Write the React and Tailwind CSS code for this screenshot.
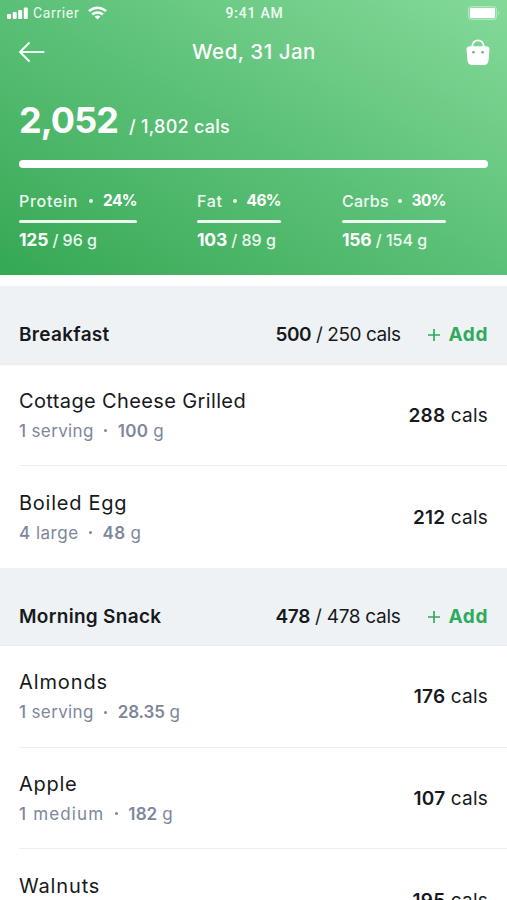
const macros = [
  { name: "Protein", percent: "24%", eaten: 125, goal: 96, box: "w-[118px] mr-[60px]", label: "tracking-[0.7px]" },
  { name: "Fat", percent: "46%", eaten: 103, goal: 89, box: "w-[84px] mr-[61px]", label: "tracking-[0.7px]" },
  { name: "Carbs", percent: "30%", eaten: 156, goal: 154, box: "w-[104px]", label: "tracking-[0.2px]" },
];

const meals = [
  {
    name: "Breakfast",
    total: 500,
    goal: 250,
    tracking: "tracking-[-0.45px]",
    items: [
      { name: "Cottage Cheese Grilled", qty: "1", unit: "serving", weight: "100", cals: 288, title: "tracking-[0.37px]", sub: "tracking-[0.35px]" },
      { name: "Boiled Egg", qty: "4", unit: "large", weight: "48", cals: 212, title: "tracking-[0.75px]", sub: "tracking-[0.5px]" },
    ],
  },
  {
    name: "Morning Snack",
    total: 478,
    goal: 478,
    tracking: "tracking-[-0.3px]",
    items: [
      { name: "Almonds", qty: "1", unit: "serving", weight: "28.35", cals: 176, title: "tracking-[0.9px]", sub: "tracking-[0.35px]", amount: "tracking-[-0.1px]" },
      { name: "Apple", qty: "1", unit: "medium", weight: "182", cals: 107, title: "tracking-[0.7px]", sub: "tracking-[1.15px]", amount: "tracking-[0.1px]" },
      { name: "Walnuts", cals: 195, title: "tracking-[0.85px]" },
    ],
  },
];

function StatusBar() {
  return (
    <div className="grid h-[26px] grid-cols-3 items-center pl-[7px] pr-[7px] font-['Roboto',sans-serif] text-[14px] text-white/90">
      <div className="flex items-center">
        <svg width="21" height="12" viewBox="0 0 21 12" fill="white">
          <rect x="0" y="7" width="4" height="5" rx="1" />
          <rect x="5.7" y="5" width="4" height="7" rx="1" />
          <rect x="11.2" y="3" width="4" height="9" rx="1" />
          <rect x="16.8" y="0.5" width="4" height="11.5" rx="1" />
        </svg>
        <span className="ml-[5px] tracking-[0.65px]">Carrier</span>
        <svg className="ml-[9px]" width="19" height="14" viewBox="0 0 19 14" fill="none" stroke="white" strokeWidth="2.5">
          <path d="M1 5.2C5.8.6 13.2.6 18 5.2" />
          <path d="M4.2 8.5c3-2.8 7.6-2.8 10.6 0" />
          <path d="M9.5 13.5 6.6 10.6c1.6-1.5 4.2-1.5 5.8 0z" fill="white" stroke="none" />
        </svg>
      </div>
      <span className="pl-[2px] text-center font-medium tracking-[0.8px]">9:41 AM</span>
      <div className="flex justify-end">
        <svg width="32" height="14" viewBox="0 0 32 14">
          <rect x="0.5" y="0.5" width="28" height="13" rx="2.5" fill="white" fillOpacity="0.15" stroke="white" strokeOpacity="0.35" />
          <rect x="2" y="2" width="25" height="10" rx="1" fill="white" />
          <path d="M30 5v4c1.8-.6 1.8-3.4 0-4z" fill="white" fillOpacity="0.35" />
        </svg>
      </div>
    </div>
  );
}

function BackIcon() {
  return (
    <svg width="27" height="22" viewBox="0 0 27 22" fill="none" stroke="#f0fff3" strokeWidth="2.1" strokeLinecap="round" strokeLinejoin="round">
      <path d="M11 2 2 11l9 9M2 11h23.500" />
    </svg>
  );
}

function BagIcon() {
  return (
    <svg width="24" height="27" viewBox="0 0 24 27" fill="none">
      <path d="M6.300 9.500V7a5.700 5.700 0 0 1 11.400 0v2.500" stroke="white" strokeWidth="1.800" />
      <path d="M4 7.300h16c2.400 0 3.800 1.400 3.500 3.800l-1 10.400c-.3 3-2 4.500-5 4.500h-11c-3 0-4.700-1.500-5-4.500L.5 11.100C.2 8.700 1.600 7.300 4 7.300z" fill="white" />
      <circle cx="7.400" cy="13.300" r="1.300" fill="#62b67c" />
      <circle cx="16.600" cy="13.300" r="1.300" fill="#62b67c" />
    </svg>
  );
}

function Header() {
  return (
    <header className="h-[275px] bg-linear-to-tr from-[#34a853] via-[#5bc077] to-[#84da99] text-white">
      <StatusBar />
      <div className="flex h-[52px] items-center justify-between pl-[18px] pr-[17px]">
        <BackIcon />
        <h1 className="mr-[3px] text-[20.500px] font-medium tracking-[0.5px]">Wed, 31 Jan</h1>
        <BagIcon />
      </div>

      <div className="mx-[19px] mt-[19px] flex h-[47px] items-baseline">
        <span className="text-[36px] font-bold leading-[46px] tracking-[-0.9px]">2,052</span>
        <span className="ml-[11px] text-[18px] font-medium tracking-[0.25px]">/ 1,802 cals</span>
      </div>
      <div className="mx-[19px] mt-[16px] h-[8px] rounded-full bg-white" />

      <div className="mt-[22px] flex pl-[19px]">
        {macros.map((m) => (
          <div key={m.name} className={m.box}>
            <div className="flex items-center justify-between whitespace-nowrap text-[16px] font-medium leading-[22px] text-white/90">
              <span className={m.label}>{m.name}</span>
              <span className="h-[4px] w-[4px] rounded-full bg-white/90" />
              <span className="text-[15.500px] font-bold tracking-[-0.6px] text-white">{m.percent}</span>
            </div>
            <div className="mt-[8px] h-[3px] rounded-full bg-white/90" />
            <div className="mt-[5px] whitespace-nowrap text-[16px] font-medium leading-[23px] text-white/90">
              <span className="text-[17.500px] font-bold tracking-[-0.2px] text-white">{m.eaten}</span> / {m.goal} g
            </div>
          </div>
        ))}
      </div>
    </header>
  );
}

function FoodRow({ item }) {
  return (
    <li className="ml-[19px] flex h-[101.500px] items-center justify-between border-b border-[#eceef0] pr-[19px] last:border-b-0">
      <div className="h-[54px]">
        <p className={`text-[20px] leading-[26px] ${item.title}`}>{item.name}</p>
        {item.weight && (
          <div className="mt-[6px] flex items-center text-[17px] leading-[22px] text-[#7d879c]">
            <span className={item.sub}><b className="font-medium">{item.qty}</b> {item.unit}</span>
            <span className="mx-[10.500px] h-[3px] w-[3px] rounded-full bg-[#7d879c]" />
            <span className={item.amount || "tracking-[0.3px]"}><b className="font-semibold">{item.weight}</b> g</span>
          </div>
        )}
      </div>
      <p className="mt-[2px] text-[19px] tracking-[0.2px]"><b className="font-semibold">{item.cals}</b> cals</p>
    </li>
  );
}

function Meal({ meal }) {
  return (
    <section>
      <div className="flex h-[78.500px] items-center border-b border-[#e9edf0] bg-[#eef2f5] px-[19px] pt-[21px] text-[19px]">
        <h2 className="flex-1 font-semibold tracking-[0.3px]">{meal.name}</h2>
        <span className={meal.tracking}><b className="font-semibold">{meal.total}</b> / {meal.goal} cals</span>
        <button className="ml-[28px] flex items-center font-bold tracking-[0.6px] text-[#2fab5c]">
          <svg className="mr-[8px]" width="12" height="12" viewBox="0 0 12 12" stroke="currentColor" strokeWidth="1.700">
            <path d="M6 0v12M0 6h12" />
          </svg>
          Add
        </button>
      </div>
      <ul>
        {meal.items.map((item) => (
          <FoodRow key={item.name} item={item} />
        ))}
      </ul>
    </section>
  );
}

export default function App() {
  return (
    <div className="h-[900px] w-[507px] overflow-hidden bg-white font-['Inter',sans-serif] text-[#17191c]">
      <Header />
      <main className="pt-[11px]">
        {meals.map((meal) => (
          <Meal key={meal.name} meal={meal} />
        ))}
      </main>
    </div>
  );
}
